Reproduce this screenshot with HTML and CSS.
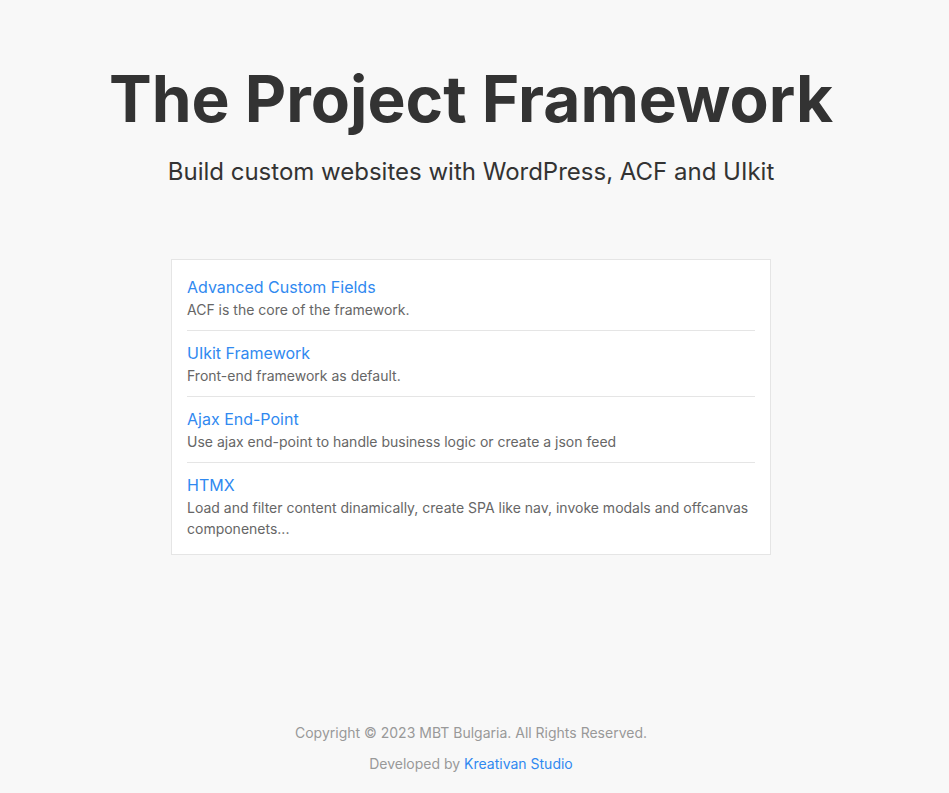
FILE: index.html
```html
<!DOCTYPE html>
<html lang="en">
<head>
<meta charset="utf-8">
<title>The Project Framework</title>
<link rel="stylesheet" href="styles.css">
</head>
<body>
<div class="page">
  <header class="hero">
    <h1 class="hero-title">The Project Framework</h1>
    <p class="hero-lead">Build custom websites with WordPress, ACF and UIkit</p>
  </header>
  <main class="main">
    <div class="card">
      <ul class="list">
        <li class="item">
          <a class="item-title" href="#">Advanced Custom Fields</a>
          <p class="item-desc">ACF is the core of the framework.</p>
        </li>
        <li class="item">
          <a class="item-title" href="#">UIkit Framework</a>
          <p class="item-desc">Front-end framework as default.</p>
        </li>
        <li class="item">
          <a class="item-title" href="#">Ajax End-Point</a>
          <p class="item-desc">Use ajax end-point to handle business logic or create a json feed</p>
        </li>
        <li class="item">
          <a class="item-title" href="#">HTMX</a>
          <p class="item-desc">Load and filter content dinamically, create SPA like nav, invoke modals and offcanvas componenets...</p>
        </li>
      </ul>
    </div>
  </main>
  <footer class="footer">
    <p class="footer-line">Copyright © 2023 MBT Bulgaria. All Rights Reserved.</p>
    <p class="footer-line">Developed by <a class="footer-link" href="#">Kreativan Studio</a></p>
  </footer>
</div>
</body>
</html>
```

FILE: styles.css
```css
html, body {
  margin: 0;
  padding: 0;
}
body {
  background: #f8f8f8;
  font-family: Inter, "Noto Sans", sans-serif;
  color: #666;
  font-size: 16px;
  line-height: 1.5;
}
.page {
  min-height: 793px;
  display: flex;
  flex-direction: column;
  padding-right: 7px;
  box-sizing: border-box;
}
.hero {
  text-align: center;
  padding-top: 61px;
}
.hero-title {
  margin: 0;
  font-size: 64px;
  font-weight: 700;
  line-height: 1.2;
  color: #333;
}
.hero-lead {
  margin: 16px 0 0;
  font-size: 24px;
  line-height: 1.5;
  color: #333;
}
.main {
  flex: 1;
  display: flex;
  justify-content: center;
  padding-top: 69px;
}
.card {
  width: 600px;
  box-sizing: border-box;
  background: #fff;
  border: 1px solid #e5e5e5;
  padding: 15px;
  align-self: flex-start;
}
.list {
  list-style: none;
  margin: 0;
  padding: 0;
}
.item + .item {
  margin-top: 10px;
  padding-top: 10px;
  border-top: 1px solid #e5e5e5;
}
.item-title {
  display: block;
  color: #3089f0;
  text-decoration: none;
  font-size: 16px;
  line-height: 24px;
}
.item-desc {
  margin: 0;
  font-size: 14px;
  line-height: 21px;
  color: #666;
}
.footer {
  text-align: center;
  padding-bottom: 19px;
}
.footer-line {
  margin: 0;
  font-size: 14px;
  line-height: 21px;
  color: #999;
}
.footer-line + .footer-line {
  margin-top: 10px;
}
.footer-link {
  color: #3089f0;
  text-decoration: none;
}
```
